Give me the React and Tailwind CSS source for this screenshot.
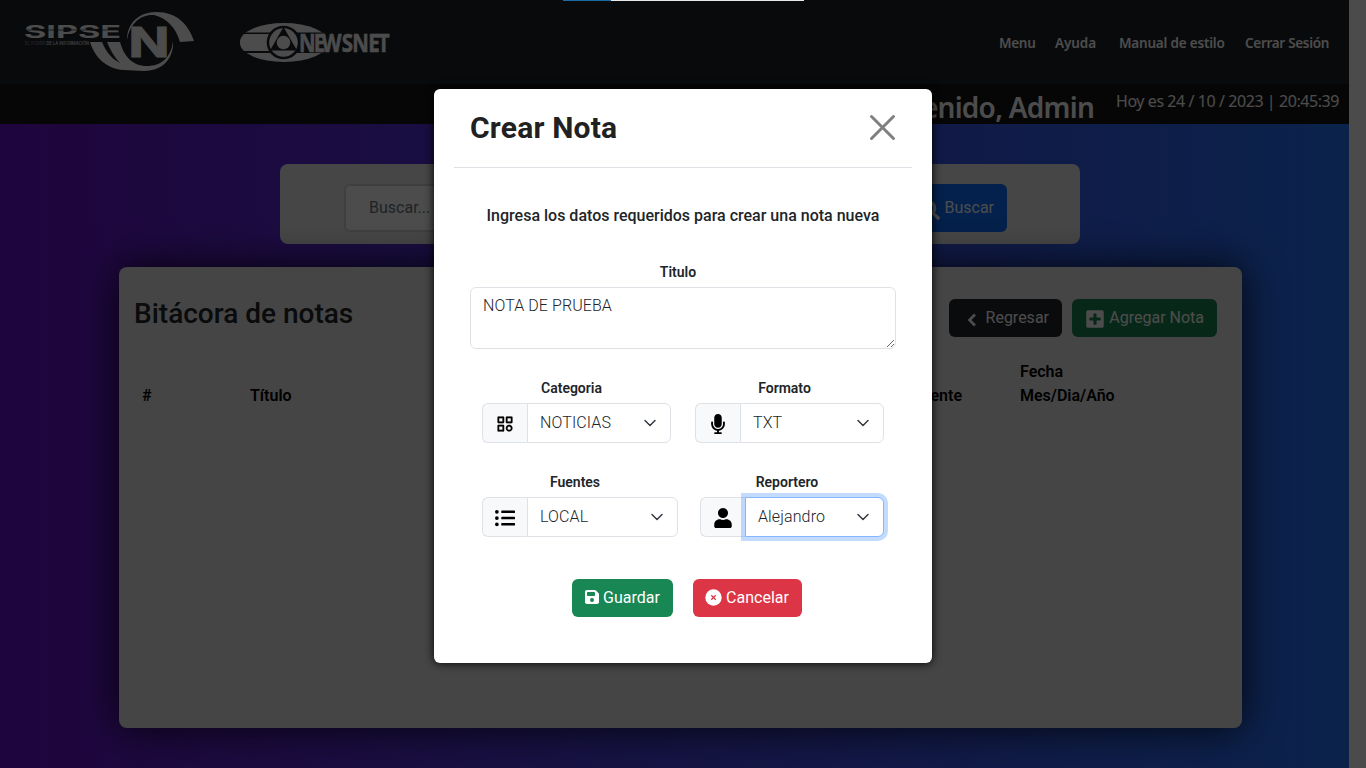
import { FaFloppyDisk } from "react-icons/fa6";
import { FaPlusSquare, FaSearch, FaUser, FaMicrophone, FaListUl } from "react-icons/fa";
import { BiCategory } from "react-icons/bi";

function SipseLogo() {
  return (
    <svg width="174" height="64" viewBox="22 10 174 64" fill="#fff">
      <path d="M127 40C127 23 139 12 156 12C177 12 188 24 194 41L180 42C176 28 167 18 154 15C141 14 130 23 127 40Z" />
      <path d="M90 42L102 42C106 52 112 59 120 63C114 57 110 49 107 42L120 42C124 56 132 66 147 66C161 66 171 58 173 41C174 57 164 71 144 71C137 71 131 70 124 70C107 69 95 58 90 42Z" />
      <text x="24" y="37.800" fontFamily="Inter, sans-serif" fontWeight="700" fontSize="17.500" textLength="97" lengthAdjust="spacingAndGlyphs">SIPSE</text>
      <path d="M24 30H121" stroke="#1f222b" strokeWidth="0.700" />
      <text x="25" y="45" fontFamily="Inter, sans-serif" fontSize="4.500" fontWeight="500" textLength="64" lengthAdjust="spacingAndGlyphs">
        <tspan opacity="0.400">EL PODER </tspan>
        <tspan opacity="0.850">DE LA INFORMACIÓN</tspan>
      </text>
      <text x="128.500" y="57" fontFamily="Inter, sans-serif" fontWeight="700" fontSize="41" textLength="41" lengthAdjust="spacingAndGlyphs" stroke="#fff" strokeWidth="1">N</text>
    </svg>
  );
}

function NewsnetLogo() {
  return (
    <svg width="158" height="44" viewBox="238 20 158 44" fill="#fff">
      <ellipse cx="284" cy="42.500" rx="44.500" ry="19.500" />
      <path d="M238 32.500H330V53H238Z" fill="#1f222b" />
      <path d="M244 34H270V51H244C238.500 46 238.500 39 244 34Z" />
      <circle cx="283.500" cy="42.500" r="16.800" fill="#1f222b" />
      <circle cx="283.500" cy="42.500" r="14.300" />
      <path d="M283.500 27L270 50.500H297Z" fill="#1f222b" />
      <circle cx="283.500" cy="42.500" r="6.800" />
      <g transform="translate(299 51.800) scale(.8 1)" fontFamily="Open Sans, sans-serif" fontWeight="700" fontSize="25.500" stroke="#fff" strokeWidth="0.500">
        <text x="0 18.500 28.300 53.500 66.500 86.500 98.500" y="0">NEWSNET</text>
      </g>
    </svg>
  );
}

function ChevronLeft() {
  return (
    <svg className="mt-[3px] mr-[9px]" width="10" height="14" viewBox="0 0 10 14" fill="none" stroke="currentColor" strokeWidth="2.800">
      <path d="M8 1.500L2.500 7L8 12.500" />
    </svg>
  );
}

function CancelIcon() {
  return (
    <svg className="-mt-px -ml-px" width="17" height="17" viewBox="0 0 17 17" fill="none">
      <circle cx="8.500" cy="8.500" r="8.200" fill="#fff" />
      <path d="M6.300 6.300l4.400 4.400M10.700 6.300l-4.400 4.400" stroke="#dc3545" strokeWidth="1.300" />
    </svg>
  );
}

function Caret() {
  return (
    <svg className="shrink-0" width="16" height="16" viewBox="0 0 16 16" fill="none">
      <path d="M3 5.500l5 5 5-5" stroke="#343a40" strokeWidth="1.500" strokeLinecap="round" strokeLinejoin="round" />
    </svg>
  );
}

function Field({ label, icon, value, width, focused }) {
  return (
    <div className={`flex flex-col ${width}`}>
      <div className="h-[31px] pt-px pr-[10px] text-center text-sm leading-[31px] font-semibold">{label}</div>
      <div className="flex h-10">
        <div className="flex w-[45px] shrink-0 items-center justify-center rounded-l-md border border-r-0 border-[#dee2e6] bg-[#f8f9fa] pt-[2px] text-black">
          {icon}
        </div>
        <div
          className={`flex flex-1 items-center justify-between rounded-r-md border bg-white pr-3 pl-3 ${
            focused ? "border-[#86b7fe] shadow-[0_0_0_4px_rgba(13,110,253,0.25)]" : "border-[#dee2e6]"
          }`}
        >
          <span className="text-base font-light tracking-[0.12px] text-[#212529]">{value}</span>
          <Caret />
        </div>
      </div>
    </div>
  );
}

function Page() {
  return (
    <div className="flex h-full w-full">
      <div className="flex w-[1349px] flex-col bg-linear-to-r/srgb from-[#6a11cb] to-[#2575fc]">
        <header className="flex h-[84px] shrink-0 items-start bg-[#1f222b]">
          <div className="pt-[10px] pl-[22px]"><SipseLogo /></div>
          <div className="pt-5 pl-[42px]"><NewsnetLogo /></div>
          <nav className="ml-auto flex h-[86px] items-center pr-5 font-['Noto_Sans'] text-[13.5px] font-semibold whitespace-nowrap text-white">
            <span className="mr-5 w-9 tracking-[-0.3px]">Menu</span>
            <span className="mr-6 w-10 tracking-[-0.1px]">Ayuda</span>
            <span className="mr-[21px] w-[105px] tracking-[-0.2px]">Manual de estilo</span>
            <span className="w-[84px] tracking-[-0.3px]">Cerrar Sesión</span>
          </nav>
        </header>
        <div className="flex h-10 shrink-0 items-start justify-end bg-[#161616] pr-[10px] font-['Noto_Sans'] whitespace-nowrap text-white">
          <span className="mr-[22px] pt-[3px] text-[28px] leading-10 font-semibold tracking-[-0.75px]">Bienvenido, Admin</span>
          <span className="w-[223px] pt-[5px] text-[16px] leading-6 tracking-[-0.43px]">Hoy es 24 / 10 / 2023 | 20:45:39</span>
        </div>
        <section className="mt-10 ml-[280px] flex h-20 w-[800px] shrink-0 items-start justify-between rounded-lg bg-[#ececec] pt-5 pr-[73px] pl-16">
          <div className="flex h-12 w-[540px] items-center rounded-md border-2 border-[#ced4da] bg-white pl-[23px] text-base text-[#6c757d]">Buscar...</div>
          <div className="flex h-12 w-[105px] items-center justify-end rounded-md bg-[#0d6efd] pr-[13px] text-base text-white">
            <FaSearch className="mt-1 mr-1 size-5" />
            <span>Buscar</span>
          </div>
        </section>
        <section className="relative mt-[23px] ml-[119px] flex h-[461px] w-[1123px] shrink-0 flex-col rounded-lg bg-[#e6e6e6] shadow-[0_0_40px_rgba(0,0,0,0.8)]">
          <div className="flex h-[70px] items-start justify-between pt-8 pr-[25px] pl-[15px]">
            <h2 className="-mt-px text-[28px] leading-8 font-medium whitespace-nowrap text-[#212529]">Bitácora de notas</h2>
            <div className="flex gap-[10px] text-base text-white">
              <div className="flex h-[38px] w-[113px] items-center justify-end rounded-md bg-[#212529] pr-[13px]">
                <ChevronLeft />
                <span>Regresar</span>
              </div>
              <div className="flex h-[38px] w-[145px] items-center justify-end rounded-md bg-[#198754] pr-[13px]">
                <FaPlusSquare className="mt-[2px] mr-1 size-5" />
                <span className="whitespace-nowrap">Agregar Nota</span>
              </div>
            </div>
          </div>
          <div className="flex items-end pt-[23px] pl-[23px] text-base leading-6 font-semibold text-black">
            <span className="w-[108px]">#</span>
            <span className="w-[200px]">Título</span>
            <span className="w-[150px]">Categoria</span>
            <span className="w-[180px]">Formato</span>
            <span className="w-[182px] text-right">Fuente</span>
            <span className="ml-[58px] leading-6">Fecha<br />Mes/Dia/Año</span>
          </div>
        </section>
      </div>
      <div className="w-[17px] bg-[#fafafa]" />
    </div>
  );
}

function Modal() {
  return (
    <div className="flex h-[574px] w-[498px] flex-col rounded-md bg-white px-5 text-[#212529] shadow-[0_0_10px_#000]">
      <div className="flex h-[79px] shrink-0 items-center justify-between border-b border-[#dee2e6] pr-4 pb-[2px] pl-4">
        <h1 className="pt-[2px] text-[30px] leading-9 font-bold tracking-[0.2px] text-[#212121]">Crear Nota</h1>
        <svg width="27" height="27" viewBox="0 0 27 27" fill="none" stroke="#7f7f7f" strokeWidth="3" strokeLinecap="round">
          <path d="M2.500 2.500L24.500 24.500M24.500 2.500L2.500 24.500" />
        </svg>
      </div>
      <p className="mt-9 text-center text-base leading-6 font-medium">Ingresa los datos requeridos para crear una nota nueva</p>
      <div className="mt-[29px] flex flex-col px-4">
        <div className="h-[30px] pr-[10px] text-center text-sm leading-[30px] font-semibold">Titulo</div>
        <textarea
          defaultValue="NOTA DE PRUEBA"
          className="block h-[62px] w-full resize rounded-md border border-[#dee2e6] px-3 py-[6px] text-base leading-6 font-light tracking-[0.08px] outline-none"
        />
      </div>
      <div className="mt-[23px] flex gap-6 pl-7">
        <Field label="Categoria" icon={<BiCategory className="mr-px size-5" stroke="currentColor" strokeWidth="0.2" />} value="NOTICIAS" width="w-[189px]" />
        <Field label="Formato" icon={<FaMicrophone className="size-5" />} value="TXT" width="w-[189px]" />
      </div>
      <div className="mt-[23px] flex gap-[22px] pl-7">
        <Field label="Fuentes" icon={<FaListUl className="size-5" />} value="LOCAL" width="w-[196px]" />
        <Field label="Reportero" icon={<FaUser className="size-5" />} value="Alejandro" width="w-[184px]" focused />
      </div>
      <div className="mt-[42px] flex gap-5 pl-[118px] text-base text-white">
        <button className="flex h-[38px] w-[101px] items-center justify-center gap-[3px] rounded-md bg-[#198754]">
          <FaFloppyDisk className="-mt-[2px] -ml-px size-4" />
          <span>Guardar</span>
        </button>
        <button className="flex h-[38px] w-[109px] items-center justify-center gap-1 rounded-md bg-[#dc3545]">
          <CancelIcon />
          <span>Cancelar</span>
        </button>
      </div>
    </div>
  );
}

export default function App() {
  return (
    <div className="relative h-[768px] w-[1366px] overflow-hidden font-[Roboto,sans-serif]">
      <Page />
      <div className="absolute inset-0 flex items-start bg-black/70 pt-[89px] pl-[434px]">
        <Modal />
      </div>
      <div className="absolute top-0 left-[563px] flex h-px w-[241px] bg-[#e8e8e8]">
        <div className="w-12 bg-[#1b6aa5]" />
      </div>
    </div>
  );
}
